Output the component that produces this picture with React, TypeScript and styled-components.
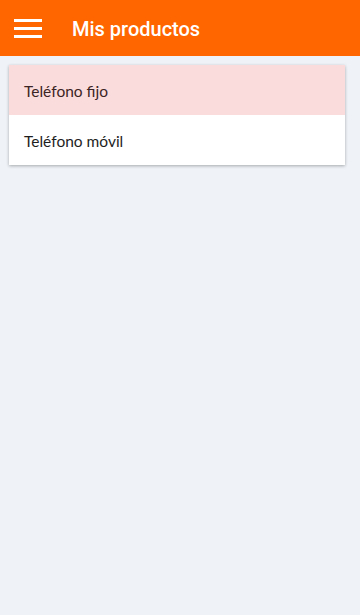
import React from "react";
import styled, { createGlobalStyle } from "styled-components";

const GlobalStyle = createGlobalStyle`
  html, body {
    margin: 0;
    padding: 0;
    background: #eff3f7;
  }
  * {
    box-sizing: border-box;
  }
`;

const Page = styled.div`
  min-height: 615px;
  background: #eff3f7;
`;

const Toolbar = styled.header`
  height: 56px;
  background: #ff6600;
  display: flex;
  align-items: center;
  padding-left: 14px;
`;

const MenuButton = styled.button`
  background: none;
  border: none;
  padding: 0;
  width: 28px;
  height: 19px;
  margin-top: 1px;
  display: flex;
  flex-direction: column;
  justify-content: space-between;
  cursor: pointer;
`;

const MenuLine = styled.span`
  display: block;
  height: 3px;
  width: 28px;
  background: #fff;
`;

const Title = styled.h1`
  margin: 1px 0 0 30px;
  font-family: Roboto, "Liberation Sans", sans-serif;
  font-weight: 500;
  font-size: 20px;
  color: #fff;
`;

const List = styled.ul`
  list-style: none;
  margin: 9px 15px 0 9px;
  padding: 0;
  background: #fff;
  box-shadow: 0 1px 3px rgba(0, 0, 0, 0.3);
`;

const Item = styled.li<{ $active?: boolean }>`
  height: 50px;
  display: flex;
  align-items: center;
  padding: 2px 0 0 15px;
  background: ${(p) => (p.$active ? "#fbdcdc" : "#fff")};
  color: ${(p) => (p.$active ? "#3b2424" : "#1e1e1e")};
  font-family: Lato, "Noto Sans", sans-serif;
  font-weight: 400;
  font-size: 15.5px;
`;

const products = ["Teléfono fijo", "Teléfono móvil"];

export default function App() {
  return (
    <Page>
      <GlobalStyle />
      <Toolbar>
        <MenuButton aria-label="Menú">
          <MenuLine />
          <MenuLine />
          <MenuLine />
        </MenuButton>
        <Title>Mis productos</Title>
      </Toolbar>
      <List>
        {products.map((name, i) => (
          <Item key={name} $active={i === 0}>
            {name}
          </Item>
        ))}
      </List>
    </Page>
  );
}
